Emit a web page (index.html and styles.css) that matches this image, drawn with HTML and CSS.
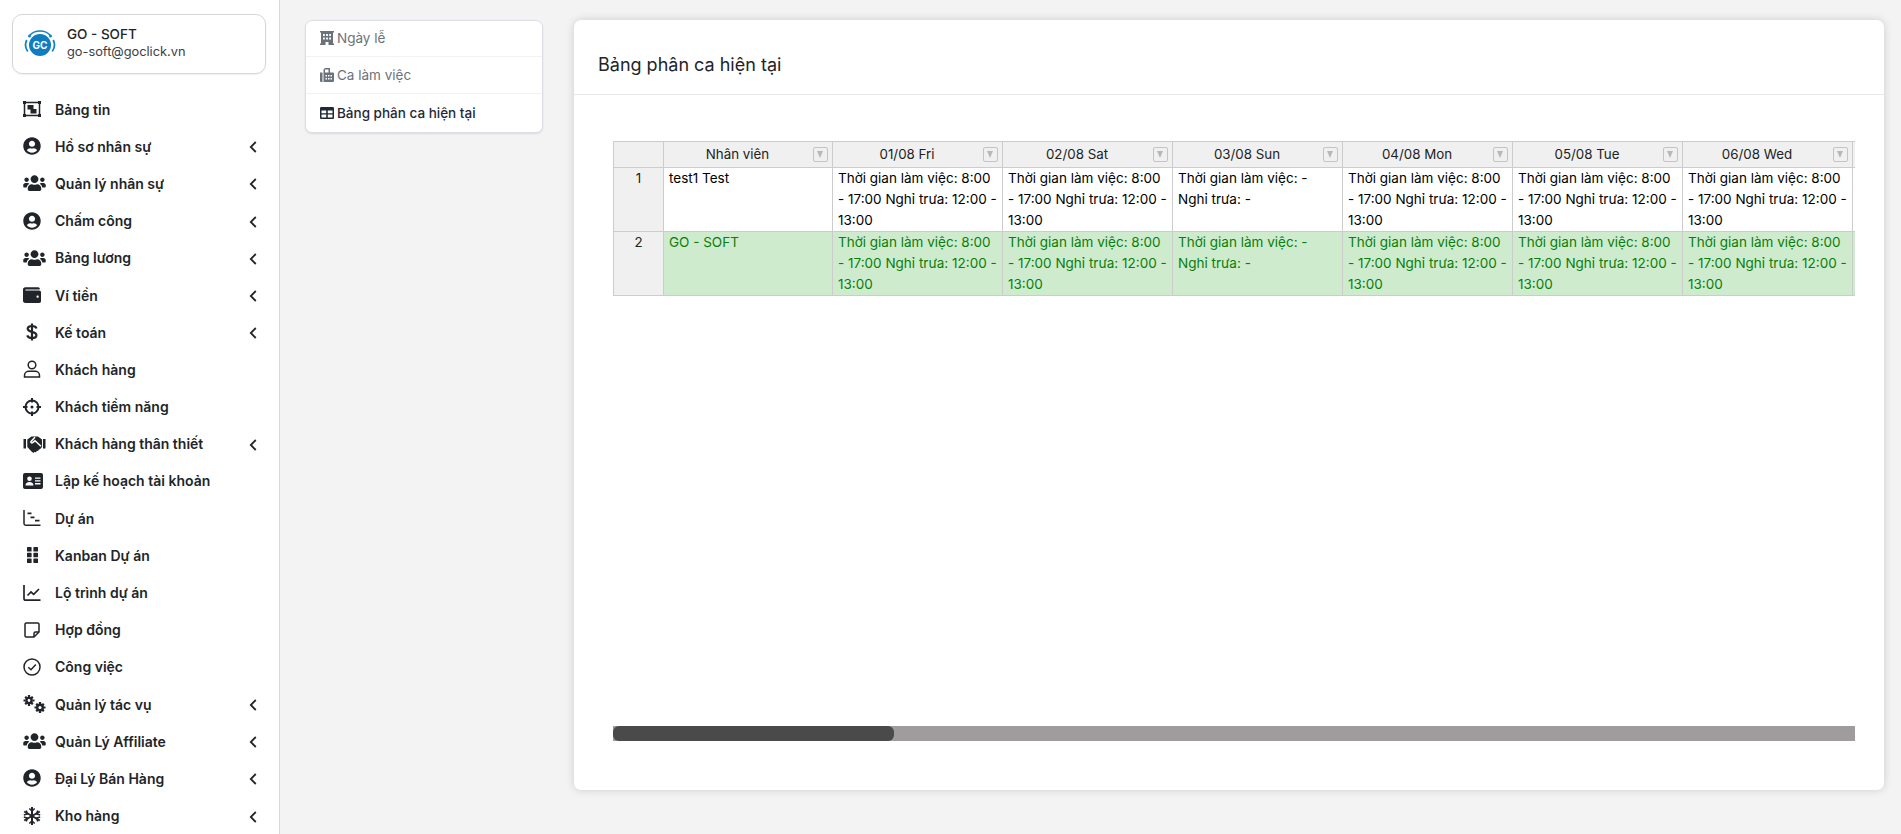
FILE: index.html
```html
<!DOCTYPE html>
<html lang="vi">
<head>
<meta charset="utf-8">
<title>Bảng phân ca hiện tại</title>
<link rel="stylesheet" href="styles.css">
</head>
<body>
<svg class="sprite" aria-hidden="true">
  <defs>
    <symbol id="i-usercircle" viewBox="0 0 496 512"><path d="M248 8C111 8 0 119 0 256s111 248 248 248 248-111 248-248S385 8 248 8zm0 96c48.6 0 88 39.4 88 88s-39.4 88-88 88-88-39.4-88-88 39.4-88 88-88zm0 344c-58.7 0-111.3-26.6-146.5-68.2 18.8-35.4 55.6-59.8 98.5-59.8 2.4 0 4.8.4 7.1 1.1 13 4.2 26.6 6.9 40.9 6.9 14.3 0 28-2.7 40.9-6.9 2.3-.7 4.7-1.1 7.1-1.1 42.9 0 79.7 24.4 98.5 59.8C359.3 421.4 306.7 448 248 448z"/></symbol>
    <symbol id="i-users" viewBox="0 0 640 512"><path d="M96 224c35.3 0 64-28.7 64-64s-28.7-64-64-64-64 28.7-64 64 28.7 64 64 64zm448 0c35.3 0 64-28.7 64-64s-28.7-64-64-64-64 28.7-64 64 28.7 64 64 64zm32 32h-64c-17.6 0-33.5 7.1-45.1 18.6 40.3 22.1 68.9 62 75.1 109.4h66c17.7 0 32-14.3 32-32v-32c0-35.3-28.7-64-64-64zm-256 0c61.9 0 112-50.1 112-112S381.9 32 320 32 208 82.1 208 144s50.1 112 112 112zm76.8 32h-8.3c-20.8 10-43.9 16-68.5 16s-47.6-6-68.5-16h-8.3C179.6 288 128 339.6 128 403.2V432c0 26.5 21.5 48 48 48h288c26.5 0 48-21.5 48-48v-28.8c0-63.6-51.6-115.2-115.2-115.2zm-223.7-13.4C161.5 263.1 145.6 256 128 256H64c-35.3 0-64 28.7-64 64v32c0 17.7 14.3 32 32 32h65.9c6.3-47.4 34.9-87.3 75.2-109.4z"/></symbol>
    <symbol id="i-wallet" viewBox="0 0 512 512"><path d="M461.2 128H80c-8.84 0-16-7.16-16-16s7.16-16 16-16h384c8.84 0 16-7.16 16-16 0-26.51-21.49-48-48-48H64C28.65 32 0 60.65 0 96v320c0 35.35 28.65 64 64 64h397.2c28.02 0 50.8-21.53 50.8-48V176c0-26.47-22.78-48-50.8-48zM416 336c-17.67 0-32-14.33-32-32s14.33-32 32-32 32 14.33 32 32-14.33 32-32 32z"/></symbol>
    <symbol id="i-board" viewBox="0 0 18 18"><path fill="none" stroke="currentColor" stroke-width="1.500" d="M1.500 2.500h15v13h-15z"/><path d="M0 1h3v3H0zM15 1h3v3h-3zM0 14h3v3H0zM15 14h3v3h-3z"/><path d="M4.500 5h6v4h3v4.500h-6v-4h-3z"/></symbol>
    <symbol id="i-dollar" viewBox="0 0 18 18"><path fill="none" stroke="currentColor" stroke-width="2.200" d="M13.500 5.500C13 3.800 11.300 3 9 3 6.500 3 4.700 4.100 4.700 5.800c0 1.800 1.800 2.500 4.300 3.100 2.600.6 4.400 1.400 4.400 3.300 0 1.800-1.900 2.800-4.400 2.800-2.400 0-4.200-.9-4.800-2.700M9 .5v17"/></symbol>
    <symbol id="i-user" viewBox="0 0 18 18"><g fill="none" stroke="currentColor" stroke-width="1.500"><circle cx="9" cy="5" r="3.800"/><path d="M1.500 17v-1.500c0-2.500 2-4.200 4.300-4.200h6.400c2.300 0 4.300 1.700 4.300 4.200V17z"/></g></symbol>
    <symbol id="i-target" viewBox="0 0 18 18"><g fill="none" stroke="currentColor" stroke-width="2"><circle cx="9" cy="9" r="6.500"/><path d="M9 0v4.500M9 13.500V18M0 9h4.500M13.500 9H18"/></g><circle cx="9" cy="9" r="1.500"/></symbol>
    <symbol id="i-handshake" viewBox="0 0 22 18"><path d="M0 4h2.500v9.500H0zM19.500 4H22v9.500h-2.500z"/><path d="M3.800 4.500 8 1.500h6.500l4 3v7.500l-2 2.300-1.200.2-.5 1.300-1.600.1-.6 1.300-1.800-.2L10 18 8 16.500 3.800 12z"/><path fill="none" stroke="#fff" stroke-width="1.500" d="M11.500 2.300 7.500 6.500c-.6.800.6 2 1.600 1.200L11.500 5.800l6 5.500"/></symbol>
    <symbol id="i-idcard" viewBox="0 0 20 16"><path fill-rule="evenodd" d="M2 0h16a2 2 0 0 1 2 2v12a2 2 0 0 1-2 2H2a2 2 0 0 1-2-2V2a2 2 0 0 1 2-2zm4.500 3.500a2.300 2.300 0 1 0 0 4.600 2.300 2.300 0 0 0 0-4.600zM2.500 12.500h8c0-2-1.500-3.500-4-3.500s-4 1.500-4 3.500zM12 4.500v1.300h5.500V4.500zM12 7.300v1.300h5.500V7.300zM12 10.100v1.300h5.500v-1.300z"/></symbol>
    <symbol id="i-gantt" viewBox="0 0 18 18"><path fill="none" stroke="currentColor" stroke-width="1.500" d="M1 1v13.500c0 1 .6 1.700 1.700 1.700H17.500"/><path d="M4.500 3.500h4v1.700h-4zM7.500 7.500h4v1.700h-4zM12 10.700h4.500v1.700H12z"/></symbol>
    <symbol id="i-grip" viewBox="0 0 11 16"><path d="M.6 0h3.400a.6.6 0 0 1 .6.600V4a.6.6 0 0 1-.6.600H.6A.6.6 0 0 1 0 4V.6A.6.6 0 0 1 .6 0zM7 0h3.400a.6.6 0 0 1 .6.600V4a.6.6 0 0 1-.6.600H7a.6.6 0 0 1-.6-.6V.6A.6.6 0 0 1 7 0zM.6 5.700h3.400a.6.6 0 0 1 .6.600v3.400a.6.6 0 0 1-.6.600H.6a.6.6 0 0 1-.6-.6V6.300a.6.6 0 0 1 .6-.6zM7 5.700h3.400a.6.6 0 0 1 .6.600v3.400a.6.6 0 0 1-.6.600H7a.6.6 0 0 1-.6-.6V6.300a.6.6 0 0 1 .6-.6zM.6 11.400h3.400a.6.6 0 0 1 .6.600v3.400a.6.6 0 0 1-.6.600H.6a.6.6 0 0 1-.6-.6V12a.6.6 0 0 1 .6-.6zM7 11.400h3.400a.6.6 0 0 1 .6.600v3.400a.6.6 0 0 1-.6.600H7a.6.6 0 0 1-.6-.6V12a.6.6 0 0 1 .6-.6z"/></symbol>
    <symbol id="i-line" viewBox="0 0 18 18"><path fill="none" stroke="currentColor" stroke-width="1.700" d="M1 1v13.500c0 1 .6 1.700 1.700 1.700H17.500M4.500 11.500l3.500-3.500 2.700 2.300L16 5"/></symbol>
    <symbol id="i-note" viewBox="0 0 18 18"><g fill="none" stroke="currentColor" stroke-width="1.500"><path d="M3.200 2h11.600c.7 0 1.200.5 1.200 1.200V11l-5 5H3.200c-.7 0-1.200-.5-1.200-1.200V3.200C2 2.500 2.500 2 3.200 2z"/><path d="M16 11h-3.500c-.9 0-1.500.6-1.500 1.500V16"/></g></symbol>
    <symbol id="i-check" viewBox="0 0 18 18"><g fill="none" stroke="currentColor" stroke-width="1.500"><circle cx="9" cy="9" r="8"/><path d="M5.300 9.300 8 11.800l4.800-5.200"/></g></symbol>
    <symbol id="i-cogs" viewBox="0 0 23 18"><g fill="none" stroke="currentColor"><circle cx="6" cy="5.500" r="2.600" stroke-width="2.400"/><path stroke-width="2.200" d="M6 0v2M6 9v2M.5 5.500h2M9.500 5.500h2M2.200 1.700l1.400 1.400M8.400 7.900l1.400 1.400M2.200 9.300l1.400-1.400M8.400 3.100l1.400-1.400"/><circle cx="17" cy="12.500" r="2.800" stroke-width="2.400"/><path stroke-width="2.200" d="M17 7v2M17 16v2M11.500 12.500h2M20.500 12.500h2M13.200 8.700l1.400 1.400M19.400 14.900l1.400 1.400M13.200 16.300l1.400-1.400M19.400 10.100l1.400-1.400"/></g></symbol>
    <symbol id="i-snow" viewBox="0 0 18 18"><g fill="none" stroke="currentColor" stroke-width="2"><path d="M9 0v18M1.200 4.500l15.600 9M1.200 13.500l15.600-9"/><path stroke-width="1.600" d="M6.300 1.500 9 4l2.700-2.500M6.300 16.500 9 14l2.700 2.500M.8 8l3.300-1L3.300 3.500M17.200 10l-3.300 1 .8 3.500M.8 10l3.300 1-.8 3.500M17.200 8l-3.300-1 .8-3.500"/></g></symbol>
    <symbol id="i-chev" viewBox="0 0 8 12"><path fill="none" stroke="currentColor" stroke-width="1.800" d="M6.800 1 1.800 6l5 5"/></symbol>
    <symbol id="i-building" viewBox="0 0 14 14"><path fill-rule="evenodd" d="M0 0h14v1.500h-1V12.500h1V14H8.500v-3h-3v3H0v-1.500h1V1.500H0zM3 3v2h1.800V3zM6.100 3v2h1.800V3zM9.200 3v2H11V3zM3 6.400v2h1.800v-2zM6.100 6.400v2h1.800v-2zM9.200 6.400v2H11v-2z"/></symbol>
    <symbol id="i-fax" viewBox="0 0 14 14"><path fill-rule="evenodd" d="M0 4.500h2.500V14H1a1 1 0 0 1-1-1zM3.500 1.500 5 0h5v4.500h3a1 1 0 0 1 1 1V13a1 1 0 0 1-1 1H3.500zM5 1.500v3h3.500v-3zM5.500 7v1.500H7V7zM8 7v1.500h1.500V7zM10.500 7v1.500H12V7zM5.500 10v1.500H7V10zM8 10v1.500h1.500V10zM10.500 10v1.500H12V10z"/></symbol>
    <symbol id="i-table" viewBox="0 0 14 12"><path fill-rule="evenodd" d="M1.300 0h11.400C13.400 0 14 .6 14 1.300v9.400c0 .7-.6 1.300-1.300 1.300H1.300C.6 12 0 11.400 0 10.700V1.300C0 .6.600 0 1.300 0zm.2 3.500v2.700h4.700V3.500zm6.300 0v2.700h4.700V3.500zM1.500 7.600v2.900h4.700V7.600zm6.300 0v2.900h4.700V7.600z"/></symbol>
  </defs>
</svg>

<div class="app">
  <aside class="sidebar">
    <div class="profile">
      <svg class="logo" viewBox="0 0 32 28">
        <g fill="none" stroke="#1683c4">
          <path stroke-width="1.300" d="M5.500 5.500C8 2.500 11.800 1 16 1s8 1.500 10.500 4.500"/>
          <path stroke-width="1.800" d="M2.800 10C1 13.500 1.300 18 3.700 21.500M29.200 10c1.800 3.500 1.500 8-.9 11.500"/>
        </g>
        <circle cx="5.500" cy="6" r="1.500" fill="#1683c4"/>
        <circle cx="26.500" cy="6" r="1.500" fill="#1683c4"/>
        <circle cx="16" cy="15" r="11" fill="#0f7dc0"/>
        <text x="16" y="18.600" class="logo-text">GC</text>
      </svg>
      <div class="profile-text">
        <div class="profile-name">GO - SOFT</div>
        <div class="profile-mail">go-soft@goclick.vn</div>
      </div>
    </div>
    <nav class="nav">
      <a class="nav-item"><span class="nav-icon"><svg class="ic-board"><use href="#i-board"/></svg></span><span class="nav-label">Bảng tin</span></a>
      <a class="nav-item"><span class="nav-icon"><svg class="ic-round"><use href="#i-usercircle"/></svg></span><span class="nav-label">Hồ sơ nhân sự</span><svg class="chev"><use href="#i-chev"/></svg></a>
      <a class="nav-item"><span class="nav-icon"><svg class="ic-wide"><use href="#i-users"/></svg></span><span class="nav-label">Quản lý nhân sự</span><svg class="chev"><use href="#i-chev"/></svg></a>
      <a class="nav-item"><span class="nav-icon"><svg class="ic-round"><use href="#i-usercircle"/></svg></span><span class="nav-label">Chấm công</span><svg class="chev"><use href="#i-chev"/></svg></a>
      <a class="nav-item"><span class="nav-icon"><svg class="ic-wide"><use href="#i-users"/></svg></span><span class="nav-label">Bảng lương</span><svg class="chev"><use href="#i-chev"/></svg></a>
      <a class="nav-item"><span class="nav-icon"><svg class="ic-round"><use href="#i-wallet"/></svg></span><span class="nav-label">Ví tiền</span><svg class="chev"><use href="#i-chev"/></svg></a>
      <a class="nav-item"><span class="nav-icon"><svg class="ic-round"><use href="#i-dollar"/></svg></span><span class="nav-label">Kế toán</span><svg class="chev"><use href="#i-chev"/></svg></a>
      <a class="nav-item"><span class="nav-icon"><svg class="ic-round"><use href="#i-user"/></svg></span><span class="nav-label">Khách hàng</span></a>
      <a class="nav-item"><span class="nav-icon"><svg class="ic-round"><use href="#i-target"/></svg></span><span class="nav-label">Khách tiềm năng</span></a>
      <a class="nav-item"><span class="nav-icon"><svg class="ic-wide"><use href="#i-handshake"/></svg></span><span class="nav-label">Khách hàng thân thiết</span><svg class="chev"><use href="#i-chev"/></svg></a>
      <a class="nav-item"><span class="nav-icon"><svg class="ic-card"><use href="#i-idcard"/></svg></span><span class="nav-label">Lập kế hoạch tài khoản</span></a>
      <a class="nav-item"><span class="nav-icon"><svg class="ic-round"><use href="#i-gantt"/></svg></span><span class="nav-label">Dự án</span></a>
      <a class="nav-item"><span class="nav-icon"><svg class="ic-grip"><use href="#i-grip"/></svg></span><span class="nav-label">Kanban Dự án</span></a>
      <a class="nav-item"><span class="nav-icon"><svg class="ic-round"><use href="#i-line"/></svg></span><span class="nav-label">Lộ trình dự án</span></a>
      <a class="nav-item"><span class="nav-icon"><svg class="ic-round"><use href="#i-note"/></svg></span><span class="nav-label">Hợp đồng</span></a>
      <a class="nav-item"><span class="nav-icon"><svg class="ic-round"><use href="#i-check"/></svg></span><span class="nav-label">Công việc</span></a>
      <a class="nav-item"><span class="nav-icon"><svg class="ic-wide"><use href="#i-cogs"/></svg></span><span class="nav-label">Quản lý tác vụ</span><svg class="chev"><use href="#i-chev"/></svg></a>
      <a class="nav-item"><span class="nav-icon"><svg class="ic-wide"><use href="#i-users"/></svg></span><span class="nav-label">Quản Lý Affiliate</span><svg class="chev"><use href="#i-chev"/></svg></a>
      <a class="nav-item"><span class="nav-icon"><svg class="ic-round"><use href="#i-usercircle"/></svg></span><span class="nav-label">Đại Lý Bán Hàng</span><svg class="chev"><use href="#i-chev"/></svg></a>
      <a class="nav-item"><span class="nav-icon"><svg class="ic-round"><use href="#i-snow"/></svg></span><span class="nav-label">Kho hàng</span><svg class="chev"><use href="#i-chev"/></svg></a>
    </nav>
  </aside>

  <main class="content">
    <div class="tabs">
      <a class="tab"><svg class="tab-icon"><use href="#i-building"/></svg>Ngày lễ</a>
      <a class="tab"><svg class="tab-icon"><use href="#i-fax"/></svg>Ca làm việc</a>
      <a class="tab tab-active"><svg class="tab-icon"><use href="#i-table"/></svg>Bảng phân ca hiện tại</a>
    </div>
    <section class="panel">
      <h1 class="panel-title">Bảng phân ca hiện tại</h1>
      <div class="panel-body">
        <div class="grid-wrap">
          <table class="grid">
            <colgroup><col class="c-idx"><col class="c-name"><col class="c-day"><col class="c-day"><col class="c-day"><col class="c-day"><col class="c-day"><col class="c-day"><col class="c-day"></colgroup>
            <thead>
              <tr>
                <th></th>
                <th><span class="th-in">Nhân viên<i class="filter"></i></span></th>
                <th><span class="th-in">01/08 Fri<i class="filter"></i></span></th>
                <th><span class="th-in">02/08 Sat<i class="filter"></i></span></th>
                <th><span class="th-in">03/08 Sun<i class="filter"></i></span></th>
                <th><span class="th-in">04/08 Mon<i class="filter"></i></span></th>
                <th><span class="th-in">05/08 Tue<i class="filter"></i></span></th>
                <th><span class="th-in">06/08 Wed<i class="filter"></i></span></th>
                <th><span class="th-in">07/08 Thu<i class="filter"></i></span></th>
              </tr>
            </thead>
            <tbody>
              <tr>
                <th>1</th>
                <td>test1 Test</td>
                <td>Thời gian làm việc: 8:00 - 17:00 Nghỉ trưa: 12:00 - 13:00</td>
                <td>Thời gian làm việc: 8:00 - 17:00 Nghỉ trưa: 12:00 - 13:00</td>
                <td>Thời gian làm việc: - Nghỉ trưa: -</td>
                <td>Thời gian làm việc: 8:00 - 17:00 Nghỉ trưa: 12:00 - 13:00</td>
                <td>Thời gian làm việc: 8:00 - 17:00 Nghỉ trưa: 12:00 - 13:00</td>
                <td>Thời gian làm việc: 8:00 - 17:00 Nghỉ trưa: 12:00 - 13:00</td>
                <td>Thời gian làm việc: 8:00 - 17:00 Nghỉ trưa: 12:00 - 13:00</td>
              </tr>
              <tr class="row-me">
                <th>2</th>
                <td>GO - SOFT</td>
                <td>Thời gian làm việc: 8:00 - 17:00 Nghỉ trưa: 12:00 - 13:00</td>
                <td>Thời gian làm việc: 8:00 - 17:00 Nghỉ trưa: 12:00 - 13:00</td>
                <td>Thời gian làm việc: - Nghỉ trưa: -</td>
                <td>Thời gian làm việc: 8:00 - 17:00 Nghỉ trưa: 12:00 - 13:00</td>
                <td>Thời gian làm việc: 8:00 - 17:00 Nghỉ trưa: 12:00 - 13:00</td>
                <td>Thời gian làm việc: 8:00 - 17:00 Nghỉ trưa: 12:00 - 13:00</td>
                <td>Thời gian làm việc: 8:00 - 17:00 Nghỉ trưa: 12:00 - 13:00</td>
              </tr>
            </tbody>
          </table>
        </div>
        <div class="scrollbar"><div class="scroll-thumb"></div></div>
      </div>
    </section>
  </main>
</div>
</body>
</html>
```

FILE: styles.css
```css
* { box-sizing: border-box; }
html, body { margin: 0; padding: 0; height: 100%; overflow: hidden; }
body { font-family: Inter, "Noto Sans", sans-serif; font-size: 14px; color: #212529; background: #f3f3f3; }
.sprite { display: none; }
svg { fill: currentColor; display: block; }

.app { display: flex; height: 834px; }

.sidebar { width: 280px; flex: none; height: 834px; overflow: hidden; background: #fff; border-right: 1px solid #cfd8e3; padding: 14px 13px 0 12px; }

.profile { display: flex; align-items: center; height: 60px; border: 1px solid #d6d6d6; border-radius: 10px; padding: 0 10px 0 11px; box-shadow: 0 1px 2px rgba(0,0,0,.06); }
.logo { width: 32px; height: 28px; flex: none; margin-right: 11px; }
.logo-text { font-family: Inter, sans-serif; font-size: 10px; font-weight: 700; fill: #fff; text-anchor: middle; }
.profile-text { margin-top: -2px; }
.profile-name { font-size: 13.500px; font-weight: 500; line-height: 18px; color: #212529; }
.profile-mail { font-size: 12.800px; line-height: 18px; color: #3a3f45; }

.nav { display: flex; flex-direction: column; padding-top: 16.500px; }
.nav-item { display: flex; align-items: center; height: 37.200px; flex: none; color: #212529; }
.nav-icon { width: 43px; flex: none; display: flex; padding-left: 11px; }
.ic-round { width: 18px; height: 18px; }
.ic-wide { width: 23px; height: 18px; }
.ic-card { width: 20px; height: 16px; }
.ic-board { width: 18px; height: 18px; }
.ic-grip { width: 11px; height: 16px; margin-left: 3.500px; }
.nav-label { flex: 1; font-size: 14px; font-weight: 600; white-space: nowrap; }
.chev { width: 8px; height: 12px; flex: none; margin-right: 9px; margin-top: 2px; }

.content { flex: 1; display: flex; align-items: flex-start; min-width: 0; padding: 20px 17px 0 25px; }

.tabs { width: 238px; flex: none; background: #fff; border: 1px solid #dcdfe6; border-radius: 7px; box-shadow: 0 1px 2px rgba(0,0,0,.1); overflow: hidden; margin-right: 31px; }
.tab { display: flex; align-items: center; height: 37.500px; padding: 0 14px; font-size: 13.500px; color: #6c727c; border-bottom: 1px solid #f2f2f2; white-space: nowrap; }
.tab:first-child { height: 35.500px; }
.tab:last-child { border-bottom: 0; }
.tab-active { color: #1f2937; font-weight: 500; }
.tab-icon { width: 14px; height: 14px; margin-right: 3px; flex: none; }

.panel { flex: 1; min-width: 0; height: 770px; background: #fff; border-radius: 7px; box-shadow: 0 0 9px rgba(0,0,0,.16); }
.panel-title { margin: 0; height: 75px; padding: 14px 24px 0; display: flex; align-items: center; font-size: 18px; font-weight: 400; color: #212529; border-bottom: 1px solid #e8e8e8; }
.panel-body { padding: 46px 29px 0 39px; }

.grid-wrap { height: 585px; overflow: hidden; }
.grid { table-layout: fixed; width: 1409px; border-collapse: collapse; font-size: 13.330px; line-height: 21px; color: #222; }
.c-idx { width: 50px; }
.c-name { width: 169px; }
.c-day { width: 170px; }
.grid th, .grid td { border: 1px solid #ccc; font-weight: 400; }
.grid thead th { height: 26px; background: #f0f0f0; padding: 0; text-align: center; }
.grid tbody th { background: #f0f0f0; padding: 0; vertical-align: top; text-align: center; }
.grid td { height: 64px; padding: 0 4px 0 5px; vertical-align: top; background: #fff; color: #000; font-size: 13.500px; }
.th-in { display: flex; align-items: center; justify-content: center; position: relative; height: 25px; padding-right: 21px; }
.filter { position: absolute; right: 4px; top: 5px; width: 15px; height: 15px; border: 1px solid #c4c4c4; border-radius: 2px; background: #f0f0f0; }
.filter::after { content: ""; position: absolute; left: 3px; top: 3px; border-style: solid; border-width: 7px 3.500px 0; border-color: #b8b8b8 transparent transparent; }
.grid .row-me td { background: #ceeccd; color: #0a7d0a; }

.scrollbar { height: 15px; background: #9e9c9c; }
.scroll-thumb { width: 281px; height: 15px; background: #4b4a4a; border-radius: 6px; }
```
